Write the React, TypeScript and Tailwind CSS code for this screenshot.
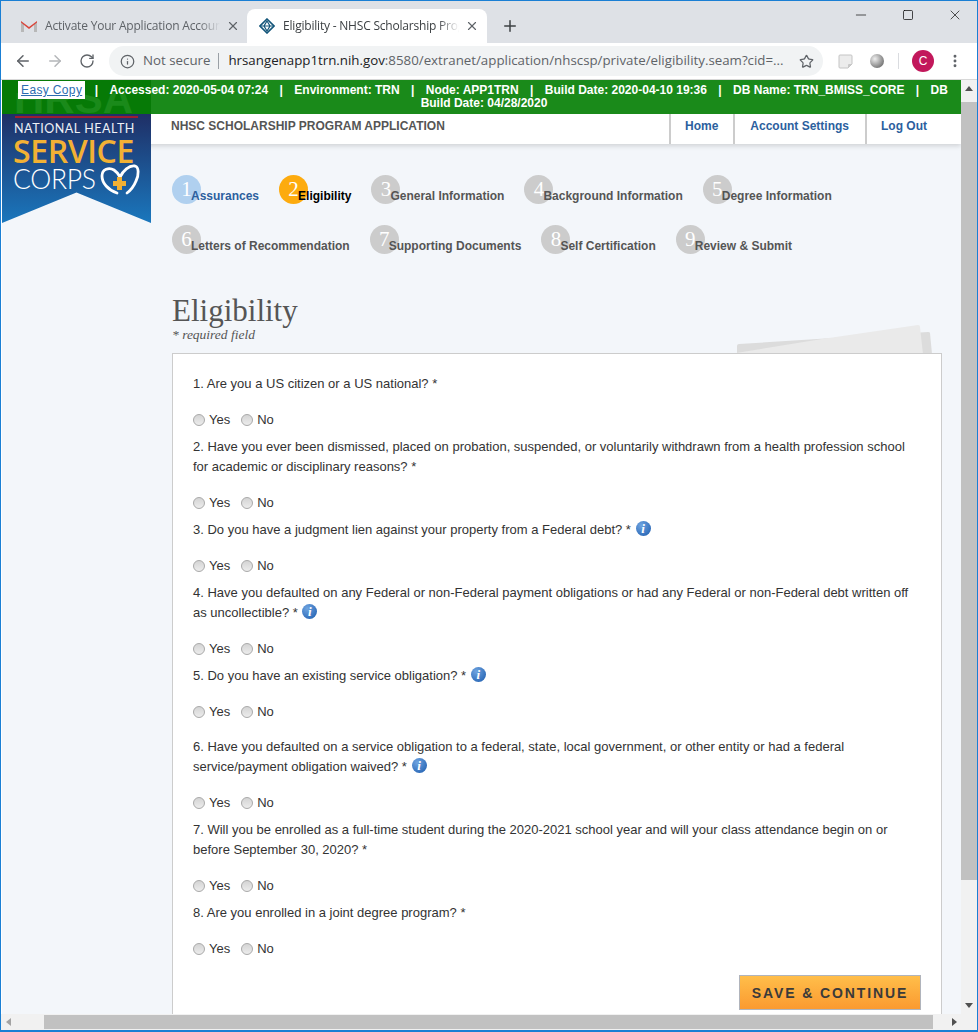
import React from 'react';
import { ArrowLeft, ArrowRight, RotateCw, Info, Star, X, Plus, MoreVertical, Minus, Square } from 'lucide-react';

const STEPS_ROW_1 = [
  { n: 1, label: 'Assurances', state: 'done' },
  { n: 2, label: 'Eligibility', state: 'active' },
  { n: 3, label: 'General Information', state: 'todo' },
  { n: 4, label: 'Background Information', state: 'todo' },
  { n: 5, label: 'Degree Information', state: 'todo' },
];

const STEPS_ROW_2 = [
  { n: 6, label: 'Letters of Recommendation', state: 'todo' },
  { n: 7, label: 'Supporting Documents', state: 'todo' },
  { n: 8, label: 'Self Certification', state: 'todo' },
  { n: 9, label: 'Review & Submit', state: 'todo' },
];

const QUESTIONS = [
  { text: '1. Are you a US citizen or a US national? *' },
  { text: '2. Have you ever been dismissed, placed on probation, suspended, or voluntarily withdrawn from a health profession school for academic or disciplinary reasons? *' },
  { text: '3. Do you have a judgment lien against your property from a Federal debt? *', info: true },
  { text: '4. Have you defaulted on any Federal or non-Federal payment obligations or had any Federal or non-Federal debt written off as uncollectible? *', info: true },
  { text: '5. Do you have an existing service obligation? *', info: true, tall: true },
  { text: '6. Have you defaulted on a service obligation to a federal, state, local government, or other entity or had a federal service/payment obligation waived? *', info: true },
  { text: '7. Will you be enrolled as a full-time student during the 2020-2021 school year and will your class attendance begin on or before September 30, 2020? *' },
  { text: '8. Are you enrolled in a joint degree program? *' },
];

const Step = ({ n, label, state }: { n: number; label: string; state: string }) => (
  <div className="flex items-start">
    <div
      className={`flex h-[29px] w-[29px] shrink-0 items-center justify-center rounded-full font-['Liberation_Serif',serif] text-[21px] leading-none text-white ${
        state === 'done' ? 'bg-[#b0d0ef]' : state === 'active' ? 'bg-[#fdab0e]' : 'bg-[#cccccc]'
      }`}
    >
      {n}
    </div>
    <span
      className={`relative -ml-[10px] mt-[14px] whitespace-nowrap text-[12px] font-bold leading-[15px] ${
        state === 'done' ? 'text-[#2c5f9e]' : state === 'active' ? 'text-black' : 'text-[#555555]'
      }`}
    >
      {label}
    </span>
  </div>
);

const InfoDot = () => (
  <span className="ml-[1px] inline-flex h-[15px] w-[15px] items-center justify-center rounded-full bg-[radial-gradient(circle_at_35%_30%,#6fa4e0,#1a5aad)] align-[1px] font-['Liberation_Serif',serif] text-[13px] font-bold italic leading-none text-white">
    i
  </span>
);

const Radio = ({ name, label }: { name: string; label: string }) => (
  <label className="flex items-center">
    <input
      type="radio"
      name={name}
      className="h-3 w-3 appearance-none rounded-full border border-[#a9a9a9] bg-[linear-gradient(#d4d4d4,#ececec)]"
    />
    <span className="ml-1">{label}</span>
  </label>
);

const Sep = () => <span className="mx-[11.4px]">|</span>;

const GreenBar = () => (
  <div className="relative h-[34px] shrink-0 overflow-hidden bg-[#1a8a1a] pl-[5px] pt-[4px] text-center font-['Liberation_Sans',sans-serif] text-[12px] font-bold leading-[13px] text-white">
    <div className="absolute left-0 top-0 h-full w-[149px] bg-[#067a06]">
      <div className="absolute inset-x-0 bottom-0 top-[13px] overflow-hidden">
        <span className="absolute left-[12px] top-[-15px] text-[42px] font-bold leading-none text-[#1a8a1a]">HRSA</span>
      </div>
    </div>
    <div className="relative whitespace-nowrap pr-[2px]">
      <a className="bg-white px-[3px] py-[2px] font-normal tracking-[0.35px] text-[#2c6cb0] underline">Easy Copy</a>
      <span className="ml-[9.4px] mr-[11.4px]">|</span>
      Accessed: 2020-05-04 07:24
      <Sep />
      Environment: TRN
      <Sep />
      Node: APP1TRN
      <Sep />
      Build Date: 2020-04-10 19:36
      <Sep />
      DB Name: TRN_BMISS_CORE
      <Sep />
      DB
    </div>
    <div className="relative">Build Date: 04/28/2020</div>
  </div>
);

const Logo = () => (
  <div className="absolute left-0 top-[34px] h-[109px] w-[149px] bg-[linear-gradient(#1f2f66,#1a77bd)] pt-[2px] [clip-path:polygon(0_0,100%_0,100%_100%,50%_72%,0_100%)]">
    <div className="mx-[13px] h-[2px] bg-[#9b1c31]" />
    <div className="mt-[2px] whitespace-nowrap pl-[12px] font-['Lato',sans-serif] text-[12.5px] leading-[17px] tracking-[0.55px] text-[#eef1f6]">
      NATIONAL HEALTH
    </div>
    <div className="-mt-[1px] whitespace-nowrap pl-[11px] font-['Open_Sans',sans-serif] text-[32px] font-semibold leading-[29px] tracking-[-0.4px] text-[#f2b134]">
      SERVICE
    </div>
    <div className="flex items-start pl-[11px]">
      <span className="font-['Lato',sans-serif] text-[26.5px] font-light leading-[28px] tracking-[-0.3px] text-white">CORPS</span>
      <svg viewBox="0 0 40 32" className="ml-[4px] mt-[-2px] h-[32px] w-[40px]">
        <path d="M17 30C8 27 2 20 2 13 2 6 9 4 14 7c3 2 5 5 6 7 3-6 9-12 15-11 4 1 4 9 1 15-2 5-5 9-9 12" fill="none" stroke="#ffffff" strokeWidth="2.8" strokeLinecap="round" />
        <path d="M17 14h5v4h4v5h-4v4h-5v-4h-4v-5h4z" fill="#f2b134" />
      </svg>
    </div>
  </div>
);

const Tabs = () => (
  <div className="flex h-[42px] shrink-0 items-end bg-[#dee1e6] font-['Open_Sans',sans-serif] text-[12px] tracking-[-0.2px]">
    <div className="flex h-[34px] w-[246px] items-center pl-[20px] text-[#5f6368]">
      <svg viewBox="0 0 16 12" className="h-[12px] w-[16px] shrink-0">
        <path d="M0 12V1l8 6 8-6v11h-3V5L8 9 3 5v7z" fill="#d9453a" />
        <path d="M3 12V5L0 2.5V12z M13 12V5l3-2.500V12z" fill="#b8b8b8" />
      </svg>
      <span className="ml-[8px] w-[175px] overflow-hidden whitespace-nowrap [mask-image:linear-gradient(to_right,#000_88%,transparent)]">
        Activate Your Application Account
      </span>
      <X size={14} strokeWidth={2} className="ml-[6px] shrink-0 text-[#5f6368]" />
    </div>
    <div className="flex h-[34px] w-[240px] items-center rounded-t-[8px] bg-white pl-[12px] text-[#3c4043]">
      <svg viewBox="0 0 16 16" className="h-[16px] w-[16px] shrink-0">
        <path d="M8 1l7 7-7 7-7-7z" fill="none" stroke="#14567a" strokeWidth="1.6" />
        <path d="M2 8h12M8 3l3 5-3 5-3-5z" fill="none" stroke="#14567a" strokeWidth="1.2" />
      </svg>
      <span className="ml-[8px] w-[176px] overflow-hidden whitespace-nowrap [mask-image:linear-gradient(to_right,#000_88%,transparent)]">
        Eligibility - NHSC Scholarship Program
      </span>
      <X size={14} strokeWidth={2} className="ml-[6px] shrink-0 text-[#5f6368]" />
    </div>
    <Plus size={18} strokeWidth={2} className="mb-[8px] ml-[14px] text-[#3c4043]" />
    <div className="mb-[20px] ml-auto flex items-center gap-[33px] pr-[14px] text-black">
      <Minus size={16} strokeWidth={1} />
      <Square size={12} strokeWidth={1.4} />
      <X size={16} strokeWidth={1} />
    </div>
  </div>
);

const Toolbar = () => (
  <div className="flex h-[37px] shrink-0 items-center border-b border-[#d8d8d8] bg-white pl-[13px] font-['Open_Sans',sans-serif] text-[13.3px]">
    <ArrowLeft size={18} strokeWidth={2} className="text-[#5f6368]" />
    <ArrowRight size={18} strokeWidth={2} className="ml-[14px] text-[#b4b6b9]" />
    <RotateCw size={16} strokeWidth={2} className="ml-[15px] text-[#5f6368]" />
    <div className="ml-[14px] flex h-[30px] w-[714px] items-center rounded-full bg-[#f1f3f4] pl-[11px]">
      <Info size={15} strokeWidth={2} className="shrink-0 text-[#5f6368]" />
      <span className="ml-[8px] text-[#5f6368]">Not secure</span>
      <span className="ml-[8px] mr-[9px] h-[16px] w-px bg-[#9aa0a6]" />
      <span className="w-[562px] shrink-0 whitespace-nowrap text-[#5f6368]">
        <span className="text-[#202124]">hrsangenapp1trn.nih.gov</span>:8580/extranet/application/nhscsp/private/eligibility.seam?cid=...
      </span>
      <Star size={15} strokeWidth={2} className="ml-[9px] shrink-0 text-[#5f6368]" />
    </div>
    <svg viewBox="0 0 15 15" className="ml-[15px] h-[15px] w-[15px]">
      <path d="M1 2q0-1 1-1h11q1 0 1 1v8l-4 4H2q-1 0-1-1z" fill="#ececec" stroke="#c4c4c4" />
      <path d="M14 10h-3q-1 0-1 1v3z" fill="#c8c8c8" />
    </svg>
    <div className="ml-[17px] h-[14px] w-[14px] rounded-full bg-[radial-gradient(circle_at_35%_35%,#eeeeee,#4f4f4f)]" />
    <span className="ml-[14px] h-[16px] w-px bg-[#dadce0]" />
    <div className="ml-[13px] flex h-[22px] w-[22px] items-center justify-center rounded-full bg-[#c2185b] font-['Liberation_Sans',sans-serif] text-[12px] text-white">
      C
    </div>
    <MoreVertical size={16} strokeWidth={2.4} className="ml-[13px] text-[#5f6368]" />
  </div>
);

const Papers = () => (
  <svg viewBox="0 0 210 30" className="absolute -top-[29px] right-[8px] h-[30px] w-[210px]">
    <path d="M13 30V22q0-2 2-2L204 8q2 0 2 1l2 21z" fill="#dcdcdc" />
    <path d="M6 30l92-15 96-14q2 0 2 2l3 27z" fill="#eaeaea" />
  </svg>
);

const Card = () => (
  <div className="relative flex-1 border border-b-0 border-[#cccccc] bg-white pl-[20px] pr-[20px] pt-[20px] text-[13px] leading-[20px] text-[#333333]">
    {QUESTIONS.map((q, i) => (
      <div key={i} className={q.tall ? 'pb-[15px]' : 'pb-[7px]'}>
        <div>
          {q.text}
          {q.info && <> <InfoDot /></>}
        </div>
        <div className="mt-[16px] flex gap-[11px]">
          <Radio name={`q${i}`} label="Yes" />
          <Radio name={`q${i}`} label="No" />
        </div>
      </div>
    ))}
    <div className="mt-[9px] flex justify-end">
      <button className="h-[35px] w-[182px] border border-[#b0b4bc] bg-[linear-gradient(#ffbe4a,#fb9a30)] text-[14px] font-bold tracking-[1.9px] text-[#3a3a3a]">
        SAVE &amp; CONTINUE
      </button>
    </div>
  </div>
);

const App: React.FC = () => {
  return (
    <div className="flex h-[1032px] w-[978px] flex-col overflow-hidden border-x border-b-2 border-t border-x-[#1a7fd4] border-b-[#1a7fd4] border-t-[#1a7fd4] font-['Liberation_Sans',sans-serif]">
      <Tabs />
      <Toolbar />
      <div className="flex min-h-0 flex-1 flex-col">
        <div className="flex min-h-0 flex-1">
          {/* page */}
          <div className="relative ml-px flex min-w-0 flex-1 flex-col overflow-hidden bg-[#f3f6fa]">
            <GreenBar />
            <Logo />
            <div className="flex h-[30px] shrink-0 items-stretch bg-white pl-[169px] pr-[19px] shadow-[0_2px_5px_rgba(0,0,0,0.15)]">
              <span className="mb-[6px] self-center text-[12px] font-bold text-[#555555]">NHSC SCHOLARSHIP PROGRAM APPLICATION</span>
              <nav className="ml-auto flex text-[12px] font-bold text-[#2c5f9e]">
                <a className="flex items-center border-l-2 border-[#cccccc] pb-[6px] pl-[14px] pr-[15px]">Home</a>
                <a className="flex items-center border-l-2 border-[#cccccc] pb-[6px] pl-[15px] pr-[16px]">Account Settings</a>
                <a className="flex items-center border-l-2 border-[#cccccc] pb-[6px] pl-[14px] pr-[15px]">Log Out</a>
              </nav>
            </div>
            <div className="flex min-h-0 flex-1 flex-col pl-[170px] pr-[19px] pt-[31px]">
              <div className="flex flex-col gap-[21px]">
                <div className="flex gap-[20px]">
                  {STEPS_ROW_1.map((s) => <Step key={s.n} {...s} />)}
                </div>
                <div className="flex gap-[20px]">
                  {STEPS_ROW_2.map((s) => <Step key={s.n} {...s} />)}
                </div>
              </div>
              <h1 className="mt-[40px] font-['Liberation_Serif',serif] text-[31px] font-normal leading-[34px] text-[#555555]">Eligibility</h1>
              <div className="font-['Liberation_Serif',serif] text-[13.5px] italic leading-[14px] text-[#555555]">* required field</div>
              <div className="relative mt-[11px] flex min-h-0 flex-1 flex-col">
                <Papers />
                <Card />
              </div>
            </div>
          </div>
          {/* vertical scrollbar */}
          <div className="flex w-[16px] shrink-0 flex-col items-center bg-[#f1f1f1] pt-[6px]">
            <span className="h-0 w-0 border-x-[4px] border-b-[5px] border-x-transparent border-b-[#505050]" />
            <div className="mt-[11px] h-[778px] w-full bg-[#c1c1c1]" />
            <span className="mb-[6px] mt-auto h-0 w-0 border-x-[4px] border-t-[5px] border-x-transparent border-t-[#505050]" />
          </div>
        </div>
        {/* horizontal scrollbar */}
        <div className="flex h-[16px] shrink-0 items-center bg-[#f1f1f1]">
          <span className="ml-[5px] h-0 w-0 border-y-[4px] border-r-[5px] border-y-transparent border-r-[#a3a3a3]" />
          <div className="ml-[33px] h-[14px] w-[889px] bg-[#c1c1c1]" />
          <span className="ml-[19px] h-0 w-0 border-y-[4px] border-l-[5px] border-y-transparent border-l-[#505050]" />
        </div>
      </div>
    </div>
  );
};

export default App;
